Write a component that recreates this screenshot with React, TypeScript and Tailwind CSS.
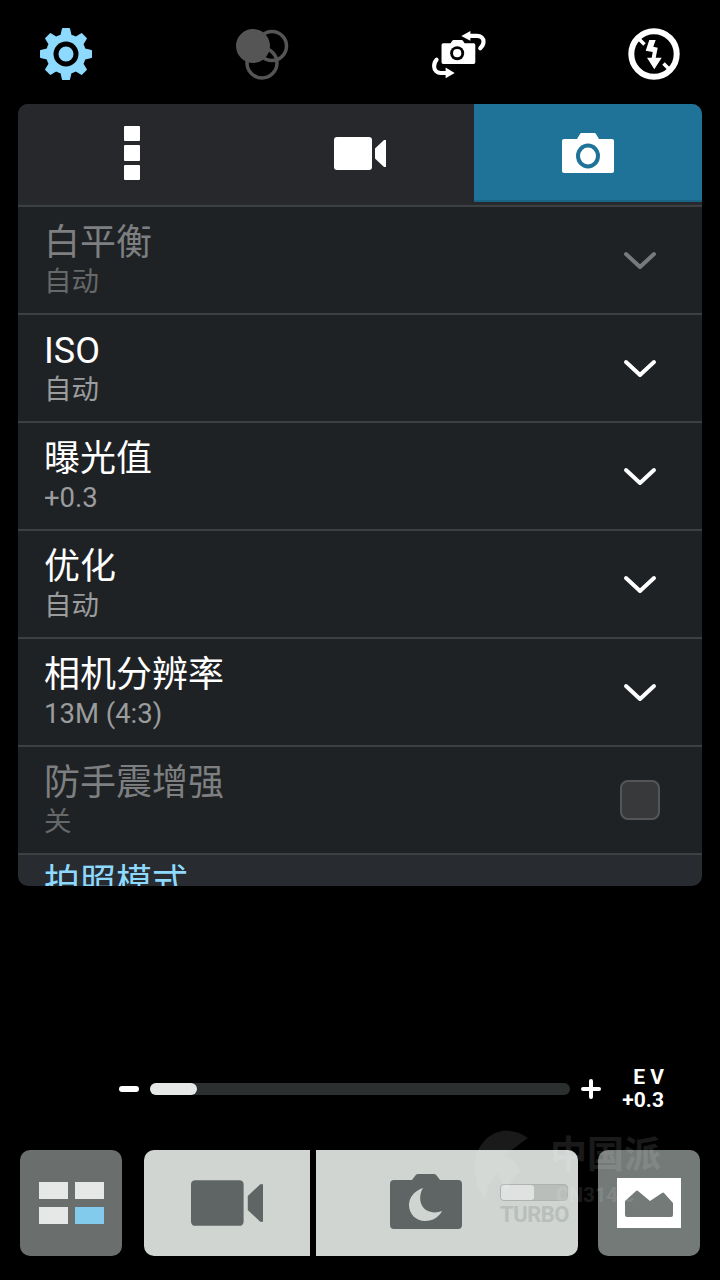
const CJK = "font-['Roboto','Noto_Sans_CJK_SC',sans-serif]";

function GearIcon() {
  const teeth = [0, 45, 90, 135, 180, 225, 270, 315];
  return (
    <svg width="56" height="56" viewBox="0 0 56 56">
      {teeth.map((a) => (
        <path key={a} d="M22 11l2-8.500a1 1 0 0 1 1-.5h6a1 1 0 0 1 1 .5l2 8.500z" fill="#8edaff" transform={`rotate(${a} 28 28)`} />
      ))}
      <circle cx="28" cy="28" r="20" fill="#8edaff" />
      <circle cx="28" cy="28" r="12.500" fill="#000" />
      <circle cx="28" cy="28" r="7.500" fill="#8edaff" />
    </svg>
  );
}

function FilterIcon() {
  return (
    <svg width="56" height="56" viewBox="0 0 56 56" fill="none">
      <circle cx="38" cy="20" r="14.500" stroke="#555" strokeWidth="3.500" />
      <circle cx="28" cy="37" r="15" stroke="#555" strokeWidth="3.500" />
      <circle cx="19" cy="20" r="17" fill="#555" />
    </svg>
  );
}

function SwitchIcon() {
  return (
    <svg width="68" height="60" viewBox="0 0 68 60" fill="none">
      <path d="M16 17h9l2-3a2 2 0 0 1 2-1h9a2 2 0 0 1 2 1l2 3h11a2 2 0 0 1 2 2v21a2 2 0 0 1-2 2h-37a2 2 0 0 1-2-2v-21a2 2 0 0 1 2-2z" fill="#fff" />
      <circle cx="33" cy="29" r="8.500" fill="#000" />
      <circle cx="33" cy="29" r="5" fill="#fff" />
      <path d="M47 8h10c5 0 8 3 8 7 0 4-2 6-4 8" stroke="#fff" strokeWidth="5" strokeLinecap="round" />
      <path d="M38 8l11-6v12z" fill="#fff" />
      <path d="M8 37c-2 2-3 4-3 8 0 5 4 8 8 8h9" stroke="#fff" strokeWidth="5" strokeLinecap="round" />
      <path d="M30 53l-11-6.500v13z" fill="#fff" />
    </svg>
  );
}

function FlashOffIcon() {
  return (
    <svg width="56" height="56" viewBox="0 0 56 56" fill="none">
      <circle cx="28" cy="28" r="22.700" stroke="#fff" strokeWidth="6" />
      <path d="M23.300 14h6.400l-2.400 6.700 4.400 1-2 10h6l-7.400 11.600-7.300-11.600h4.700l1-5.700-7-1.300z" fill="#fff" />
      <path d="M12 12l6.500 6.500M37.500 37.500l6.500 6.500" stroke="#fff" strokeWidth="3.500" />
    </svg>
  );
}

function KebabIcon() {
  return (
    <div className="flex flex-col gap-[4px]">
      <div className="w-[16px] h-[15px] bg-white rounded-[1px]" />
      <div className="w-[16px] h-[16px] bg-white rounded-[1px]" />
      <div className="w-[16px] h-[15px] bg-white rounded-[1px]" />
    </div>
  );
}

function VideoIcon({ color, w, h }: { color: string; w: number; h: number }) {
  return (
    <svg width={w} height={h} viewBox="0 0 52 33">
      <rect x="0" y="0" width="38" height="33" rx="3" fill={color} />
      <path d="M52 3v27h-2l-9-8.500v-10l9-8.500z" fill={color} />
    </svg>
  );
}

function CameraIcon() {
  return (
    <svg width="52" height="40" viewBox="0 0 52 40">
      <path d="M2 6h13l3-5a2 2 0 0 1 2-1h12a2 2 0 0 1 2 1l3 5h13a2 2 0 0 1 2 2v30a2 2 0 0 1-2 2h-48a2 2 0 0 1-2-2v-30a2 2 0 0 1 2-2z" fill="#fff" />
      <ellipse cx="26" cy="23" rx="12" ry="12.500" fill="#1f7399" />
      <ellipse cx="26" cy="23" rx="8" ry="8.500" fill="#fff" />
    </svg>
  );
}

function Chevron({ color }: { color: string }) {
  return (
    <svg width="34" height="20" viewBox="0 0 34 20" fill="none">
      <path d="M3 3l14 13 14-13" stroke={color} strokeWidth="4" strokeLinecap="round" strokeLinejoin="round" />
    </svg>
  );
}

function NightCameraIcon() {
  return (
    <svg width="72" height="56" viewBox="0 0 72 56">
      <path d="M4 6h18l3-4a4 4 0 0 1 3-2h16a4 4 0 0 1 3 2l3 4h18a4 4 0 0 1 4 4v41a4 4 0 0 1-4 4h-64a4 4 0 0 1-4-4v-41a4 4 0 0 1 4-4z" fill="#5f6564" />
      <path d="M33 14C24 17 19 24 19 31 19 40 26 47 35 47 43 47 49 43 52 37 47 39 41 39 36 36 30 32 28 22 33 14z" fill="#d0d5d2" />
    </svg>
  );
}

function MountainIcon() {
  return (
    <div className="w-[64px] h-[50px] bg-white flex items-center justify-center">
      <svg width="48" height="27" viewBox="0 0 48 27">
        <path d="M0 11L11 1Q12 0 13 1L25 11 37 3Q38 2 39 3L48 13V25A2 2 0 0 1 46 27H2A2 2 0 0 1 0 25z" fill="#747a78" />
      </svg>
    </div>
  );
}

const rows = [
  { title: "白平衡", sub: "自动", dim: true },
  { title: "ISO", sub: "自动" },
  { title: "曝光值", sub: "+0.3" },
  { title: "优化", sub: "自动" },
  { title: "相机分辨率", sub: "13M (4:3)" },
];

function SettingRow({ title, sub, dim, check }: { title: string; sub: string; dim?: boolean; check?: boolean }) {
  return (
    <div className="h-[108px] bg-[#1f2225] border-t-[2px] border-[#3d4043] flex items-center justify-between pl-[26px] pr-[45px]">
      <div className="flex flex-col pt-[2px]">
        <div className={`text-[36px] leading-[40px] ${dim ? "text-[#7d7f80]" : "text-white"}`}>{title}</div>
        <div className={`mt-[1px] text-[27.5px] leading-[36px] ${dim ? "text-[#666869]" : "text-[#9a9c9d]"}`}>{sub}</div>
      </div>
      {check ? (
        <div className="w-[40px] h-[40px] rounded-[8px] bg-[#38393b] border-[2px] border-[#535557] mr-[-3px]" />
      ) : (
        <div className="mt-[2px]">
          <Chevron color={dim ? "#77797a" : "#ffffff"} />
        </div>
      )}
    </div>
  );
}

export default function App() {
  return (
    <div className={`relative w-[720px] h-[1280px] bg-black overflow-hidden ${CJK}`}>
      {/* Top icons */}
      <header className="h-[104px] pt-[4px] px-[38px] flex items-center justify-between">
        <GearIcon />
        <FilterIcon />
        <div className="w-[56px] flex justify-center">
          <SwitchIcon />
        </div>
        <FlashOffIcon />
      </header>

      {/* Settings panel */}
      <section className="mx-[18px] h-[782px] rounded-[10px] overflow-hidden bg-[#282b30]">
        <div className="h-[100px] flex bg-[#27282c]">
          <div className="w-[228px] h-full flex items-center justify-center pb-[2px]">
            <KebabIcon />
          </div>
          <div className="w-[228px] h-full flex items-center justify-center pb-[2px]">
            <VideoIcon color="#ffffff" w={52} h={33} />
          </div>
          <div className="w-[228px] h-[98px] bg-[#1f7399] border-b-[2px] border-[#1a6488] flex items-center justify-center pt-[2px]">
            <CameraIcon />
          </div>
        </div>
        <div className="h-[1px]" />
        {rows.map((r) => (
          <SettingRow key={r.title} {...r} />
        ))}
        <SettingRow title="防手震增强" sub="关" dim check />
        <div className="h-[40px] border-t-[2px] border-[#3d4043] pl-[26px] pt-[8px] text-[36px] leading-[40px] text-[#8edaff]">
          拍照模式
        </div>
      </section>

      {/* EV slider */}
      <div className="mt-[181px] h-[44px] pl-[119px] flex items-center">
        <div className="w-[20px] h-[6px] rounded-full bg-white" />
        <div className="ml-[11px] w-[420px] h-[12px] rounded-full bg-[#2c2f2f]">
          <div className="w-[47px] h-[12px] rounded-full bg-[#e6e8e7]" />
        </div>
        <div className="ml-[11px] w-[20px] h-[20px] relative">
          <div className="absolute left-0 top-[8px] w-[20px] h-[4px] bg-white rounded-full" />
          <div className="absolute left-[8px] top-0 w-[4px] h-[20px] bg-white rounded-full" />
        </div>
        <div className="ml-[19px] w-[44px] flex flex-col items-end font-['Roboto',sans-serif] font-bold text-white text-[21px] leading-[23px] whitespace-pre">
          <div>E V</div>
          <div>+0.3</div>
        </div>
      </div>

      {/* Bottom buttons */}
      <div className="mt-[39px] pl-[20px] flex">
        <div className="w-[102px] h-[106px] rounded-[10px] bg-[#6a6f6d] grid grid-cols-[29px_29px] grid-rows-[17px_17px] gap-x-[7px] gap-y-[8px] content-center justify-center">
          <div className="bg-[#e6e8e7]" />
          <div className="bg-[#e6e8e7]" />
          <div className="bg-[#e6e8e7]" />
          <div className="bg-[#83cbec]" />
        </div>
        <div className="ml-[22px] w-[166px] h-[106px] rounded-l-[10px] bg-[#d0d5d2] flex items-center justify-center">
          <VideoIcon color="#5f6564" w={72} h={46} />
        </div>
        <div className="ml-[6px] w-[262px] h-[106px] rounded-r-[10px] bg-[#d0d5d2] relative flex items-center pl-[74px]">
          <div className="mt-[-2px]">
            <NightCameraIcon />
          </div>
          <div className="absolute left-[184px] top-[34px] w-[68px] flex flex-col">
            <div className="h-[17px] rounded-[4px] bg-[#b9bebb] border border-[#aeb3b0]">
              <div className="w-[33px] h-full rounded-[3px] bg-[#dfe2e0]" />
            </div>
            <div className="mt-[3px] font-['Roboto',sans-serif] font-bold text-[22px] leading-[22px] tracking-[-0.5px] text-[#b9bebb]">TURBO</div>
          </div>
        </div>
        <div className="ml-[20px] w-[102px] h-[106px] rounded-[10px] bg-[#747a78] flex items-center justify-center">
          <MountainIcon />
        </div>
      </div>

      {/* Watermark over the buttons */}
      <div className="absolute left-[474px] top-[1130px] w-[200px] h-[72px] pointer-events-none">
        <svg className="absolute left-0 top-0" width="62" height="72" viewBox="0 0 62 72">
          <path d="M54 8C46 2 36 0 28 1 12 4 2 18 1 34c-1 12 3 26 10 36 2-12 5-20 13-26 4 8 6 14 8 20 3-10 8-18 14-22-2-8-8-14-16-16 8-6 18-14 24-18z" fill="#ffffff" fillOpacity="0.1" />
        </svg>
        <div className="absolute left-[76px] top-[6px] text-[37px] leading-[40px] font-bold text-white/10 whitespace-nowrap">中国派</div>
        <div className="absolute left-[82px] top-[55px] text-[20px] leading-[20px] font-bold text-white/10 font-['Roboto',sans-serif]">CN314.c</div>
      </div>
    </div>
  );
}
